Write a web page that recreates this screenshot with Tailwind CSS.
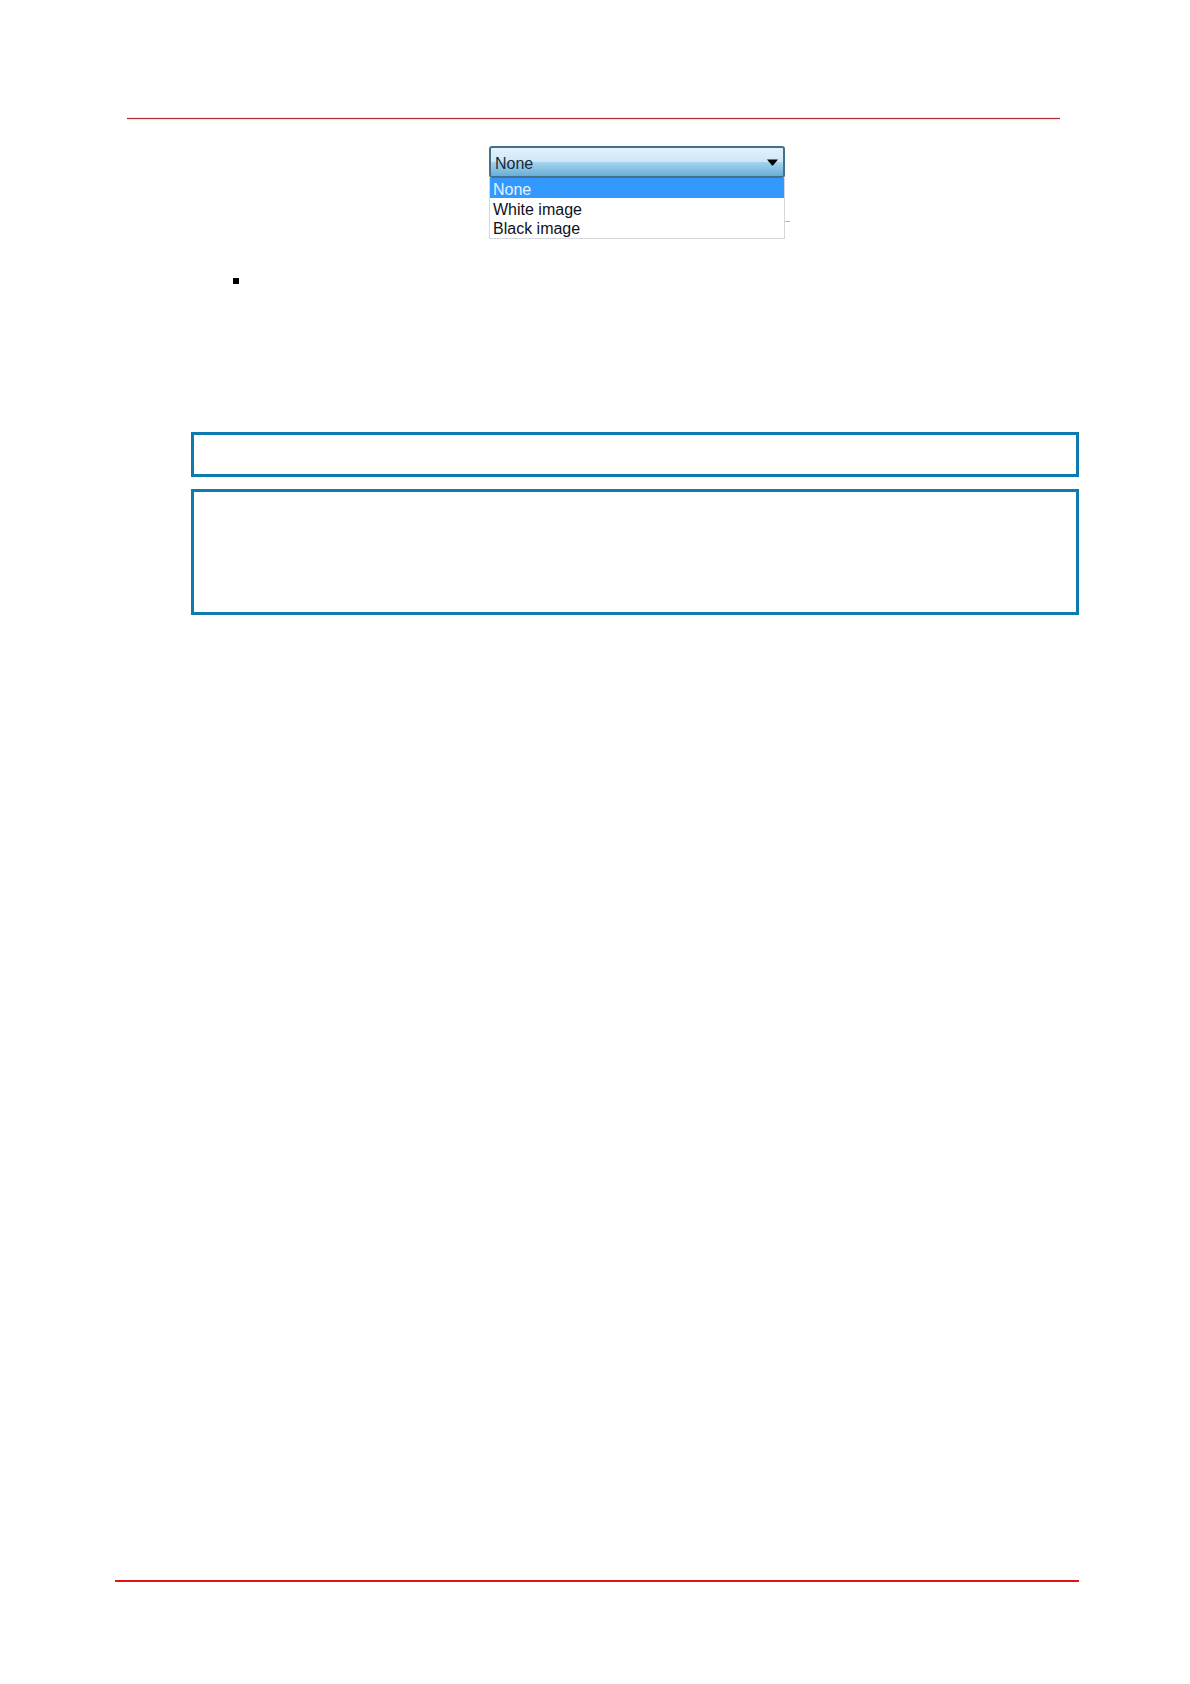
<!DOCTYPE html>
<html lang="en">
<head>
<meta charset="utf-8">
<meta name="viewport" content="width=device-width, initial-scale=1">
<title>Image selection</title>
<script src="https://cdn.jsdelivr.net/npm/@tailwindcss/browser@4"></script>
</head>
<body class="flex min-h-screen flex-col bg-white font-['Liberation_Sans',Arial,sans-serif] text-base text-[#111122]">
  <header class="pt-[117px] pr-[130px] pl-[127px]">
    <div class="h-[3px] border-y border-[#fde0e0] bg-[#b02a32]"></div>
  </header>

  <main class="flex-1 pr-[111px] pl-[191px] pt-[26px]">
    <div class="flex justify-center pl-1">
      <div class="relative w-[296px]">
        <div class="relative">
          <select aria-label="Image" class="block h-8 w-full appearance-none rounded-[3px] border-2 border-[#45708c] bg-[linear-gradient(to_bottom,#e3f1fb_0%,#cfe7f7_48%,#a3d2ee_52%,#69aed6_100%)] px-1 pt-[2px] text-base leading-7 text-[#1a2a3a] outline-none">
            <option selected>None</option>
            <option>White image</option>
            <option>Black image</option>
          </select>
          <svg class="pointer-events-none absolute top-[13px] right-[7px] h-[7px] w-[11px]" viewBox="0 0 11 7" aria-hidden="true"><path d="M0 0.5H11L6 6.5H5Z" fill="#000"/></svg>
        </div>
        <ul role="listbox" aria-label="Image options" class="border border-t-0 border-[#d5d7de] pb-[2px]">
          <li role="option" aria-selected="true" class="h-5 bg-[#3399ff] px-[3px] leading-6 text-[#e4f2ff]">None</li>
          <li role="option" aria-selected="false" class="h-[19px] px-[3px] leading-[23px]">White image</li>
          <li role="option" aria-selected="false" class="h-[19px] px-[3px] leading-[23px]">Black image</li>
        </ul>
        <span class="absolute bottom-[17px] left-full h-px w-[5px] bg-[#b8b8b8]"></span>
      </div>
    </div>

    <ul class="pt-[39px] pl-[42px]">
      <li class="h-[154px]"><span class="block h-[6px] w-[6px] bg-black"></span></li>
    </ul>

    <section class="h-[45px] border-3 border-[#0e7ab2]"></section>
    <section class="mt-3 h-[126px] border-3 border-[#0e7ab2]"></section>
  </main>

  <footer class="pr-[111px] pb-[102px] pl-[115px]">
    <div class="h-[2px] bg-[#df1414]"></div>
  </footer>
</body>
</html>
